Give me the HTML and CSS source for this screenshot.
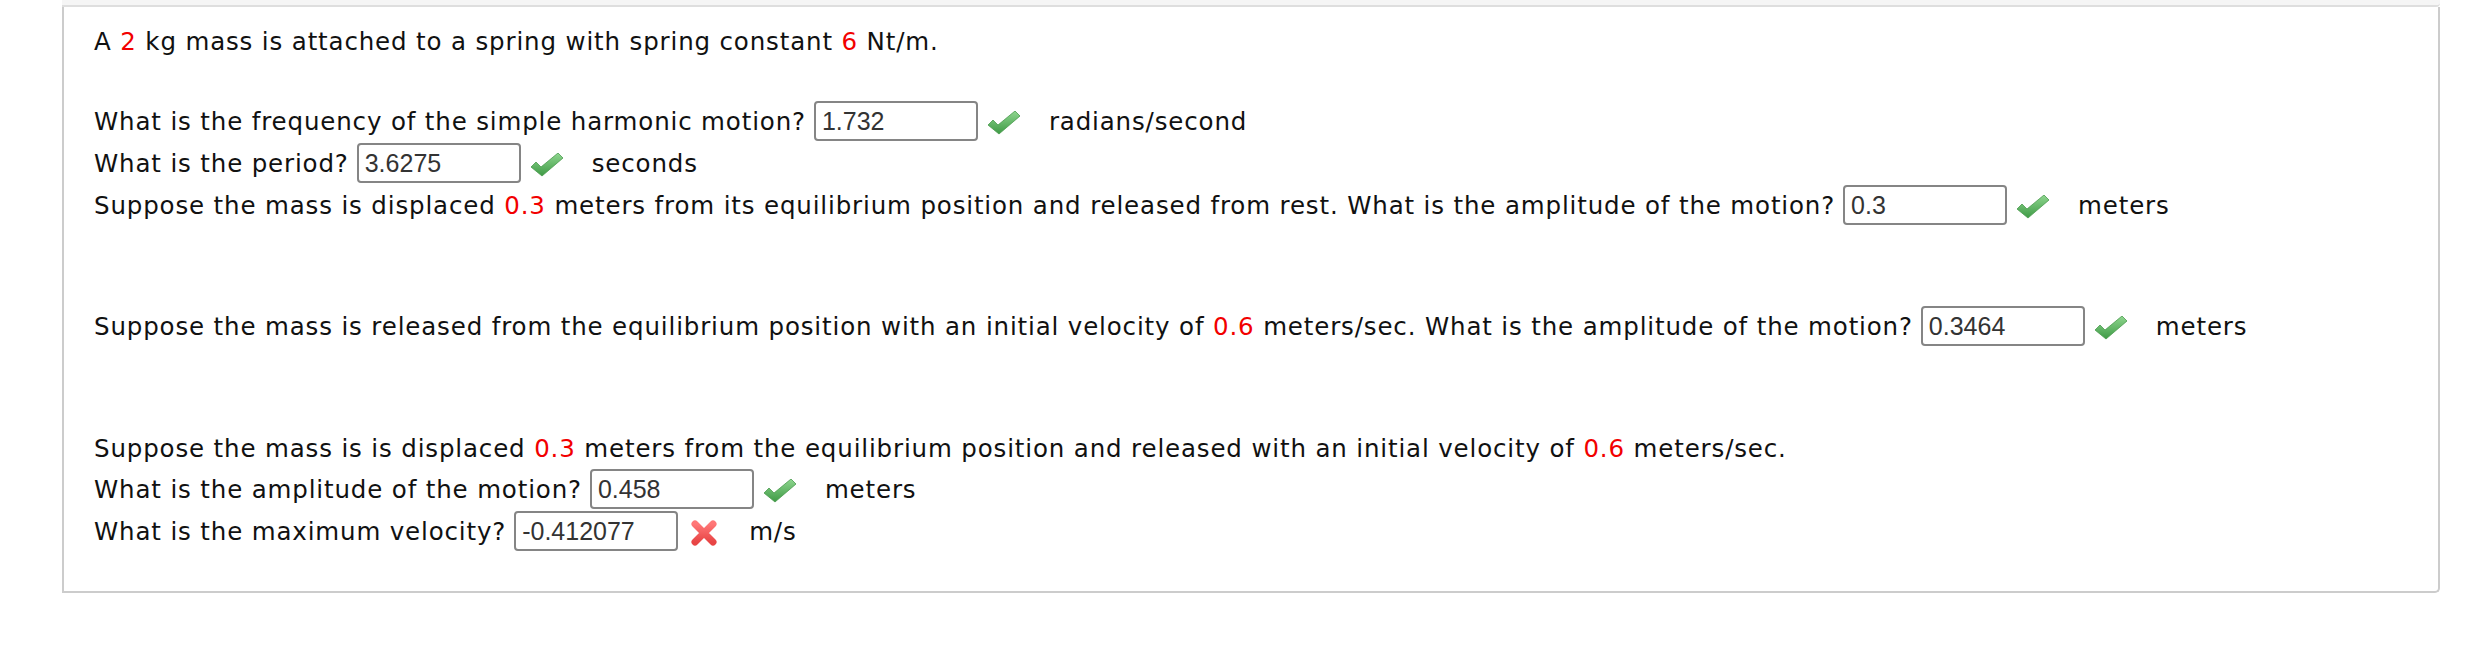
FILE: index.html
```html
<!DOCTYPE html>
<html>
<head>
<meta charset="utf-8">
<link rel="stylesheet" href="styles.css">
</head>
<body>
<div class="page">
  <div class="topbar"></div>
  <div class="card">
    <div class="row intro"><span class="q">A <span class="red">2</span> kg mass is attached to a spring with spring constant <span class="red">6</span> Nt/m.</span></div>

    <div class="row"><span class="q">What is the frequency of the simple harmonic motion?</span><input class="ans" value="1.732" readonly><span class="mark"><svg width="32" height="24" viewBox="0 0 32 24"><defs><linearGradient id="g1" x1="0" y1="0" x2="0" y2="1"><stop offset="0" stop-color="#8fd68f"/><stop offset="1" stop-color="#3e9a45"/></linearGradient></defs><polygon points="0,14 5,9 10,14 27,0 32,5 11,23" fill="url(#g1)" stroke="#4a9a4e" stroke-width="0.8" stroke-linejoin="round"/></svg></span><span class="unit">radians/second</span></div>
    <div class="row"><span class="q">What is the period?</span><input class="ans" value="3.6275" readonly><span class="mark"><svg width="32" height="24" viewBox="0 0 32 24"><polygon points="0,14 5,9 10,14 27,0 32,5 11,23" fill="url(#g1)" stroke="#4a9a4e" stroke-width="0.8" stroke-linejoin="round"/></svg></span><span class="unit">seconds</span></div>
    <div class="row"><span class="q">Suppose the mass is displaced <span class="red">0.3</span> meters from its equilibrium position and released from rest. What is the amplitude of the motion?</span><input class="ans" value="0.3" readonly><span class="mark"><svg width="32" height="24" viewBox="0 0 32 24"><polygon points="0,14 5,9 10,14 27,0 32,5 11,23" fill="url(#g1)" stroke="#4a9a4e" stroke-width="0.8" stroke-linejoin="round"/></svg></span><span class="unit">meters</span></div>

    <div class="row block2"><span class="q">Suppose the mass is released from the equilibrium position with an initial velocity of <span class="red">0.6</span> meters/sec. What is the amplitude of the motion?</span><input class="ans" value="0.3464" readonly><span class="mark"><svg width="32" height="24" viewBox="0 0 32 24"><polygon points="0,14 5,9 10,14 27,0 32,5 11,23" fill="url(#g1)" stroke="#4a9a4e" stroke-width="0.8" stroke-linejoin="round"/></svg></span><span class="unit">meters</span></div>

    <div class="row block3"><span class="q">Suppose the mass is is displaced <span class="red">0.3</span> meters from the equilibrium position and released with an initial velocity of <span class="red">0.6</span> meters/sec.</span></div>
    <div class="row"><span class="q">What is the amplitude of the motion?</span><input class="ans" value="0.458" readonly><span class="mark"><svg width="32" height="24" viewBox="0 0 32 24"><polygon points="0,14 5,9 10,14 27,0 32,5 11,23" fill="url(#g1)" stroke="#4a9a4e" stroke-width="0.8" stroke-linejoin="round"/></svg></span><span class="unit">meters</span></div>
    <div class="row"><span class="q">What is the maximum velocity?</span><input class="ans" value="-0.412077" readonly><span class="mark"><svg width="28" height="28" viewBox="0 0 28 28"><defs><linearGradient id="g2" x1="0" y1="0" x2="0" y2="1"><stop offset="0" stop-color="#f77"/><stop offset="1" stop-color="#e84545"/></linearGradient></defs><path d="M5 5 L23 23 M23 5 L5 23" stroke="url(#g2)" stroke-width="7" stroke-linecap="round"/></svg></span><span class="unit">m/s</span></div>
  </div>
</div>
</body>
</html>
```
FILE: styles.css
```css
html, body {
  margin: 0;
  padding: 0;
  background: #ffffff;
}

.page {
  width: 2378px;
  margin-left: 62px;
}

.topbar {
  height: 5px;
  background: #f5f5f5;
  border-bottom: 2px solid #dedede;
  border-bottom-right-radius: 4px;
}

.card {
  border-left: 2px solid #cccccc;
  border-right: 2px solid #cccccc;
  border-bottom: 2px solid #cccccc;
  border-bottom-right-radius: 5px;
  padding: 13px 0 39px 30px;
  font-family: "DejaVu Sans", Verdana, sans-serif;
  font-size: 24.5px;
  letter-spacing: 0.85px;
  color: #111111;
}

.row {
  display: flex;
  align-items: center;
  height: 42px;
  white-space: nowrap;
}

.intro {
  margin-bottom: 38px;
}

.block2 {
  margin-top: 79px;
}

.block3 {
  margin-top: 82px;
  height: 39px;
}

.red {
  color: #f20000;
}

.ans {
  box-sizing: border-box;
  width: 164px;
  height: 40px;
  margin: 0 0 0 8px;
  padding: 0 6px;
  border: 2px solid #858585;
  border-radius: 4px;
  background: #ffffff;
  font-family: "Liberation Sans", Arial, sans-serif;
  font-size: 25px;
  letter-spacing: 0;
  color: #333333;
  outline: none;
}

.mark {
  display: flex;
  align-items: center;
  justify-content: center;
  width: 32px;
  height: 28px;
  margin-left: 10px;
  margin-top: 3px;
}

.unit {
  margin-left: 29px;
}
```
